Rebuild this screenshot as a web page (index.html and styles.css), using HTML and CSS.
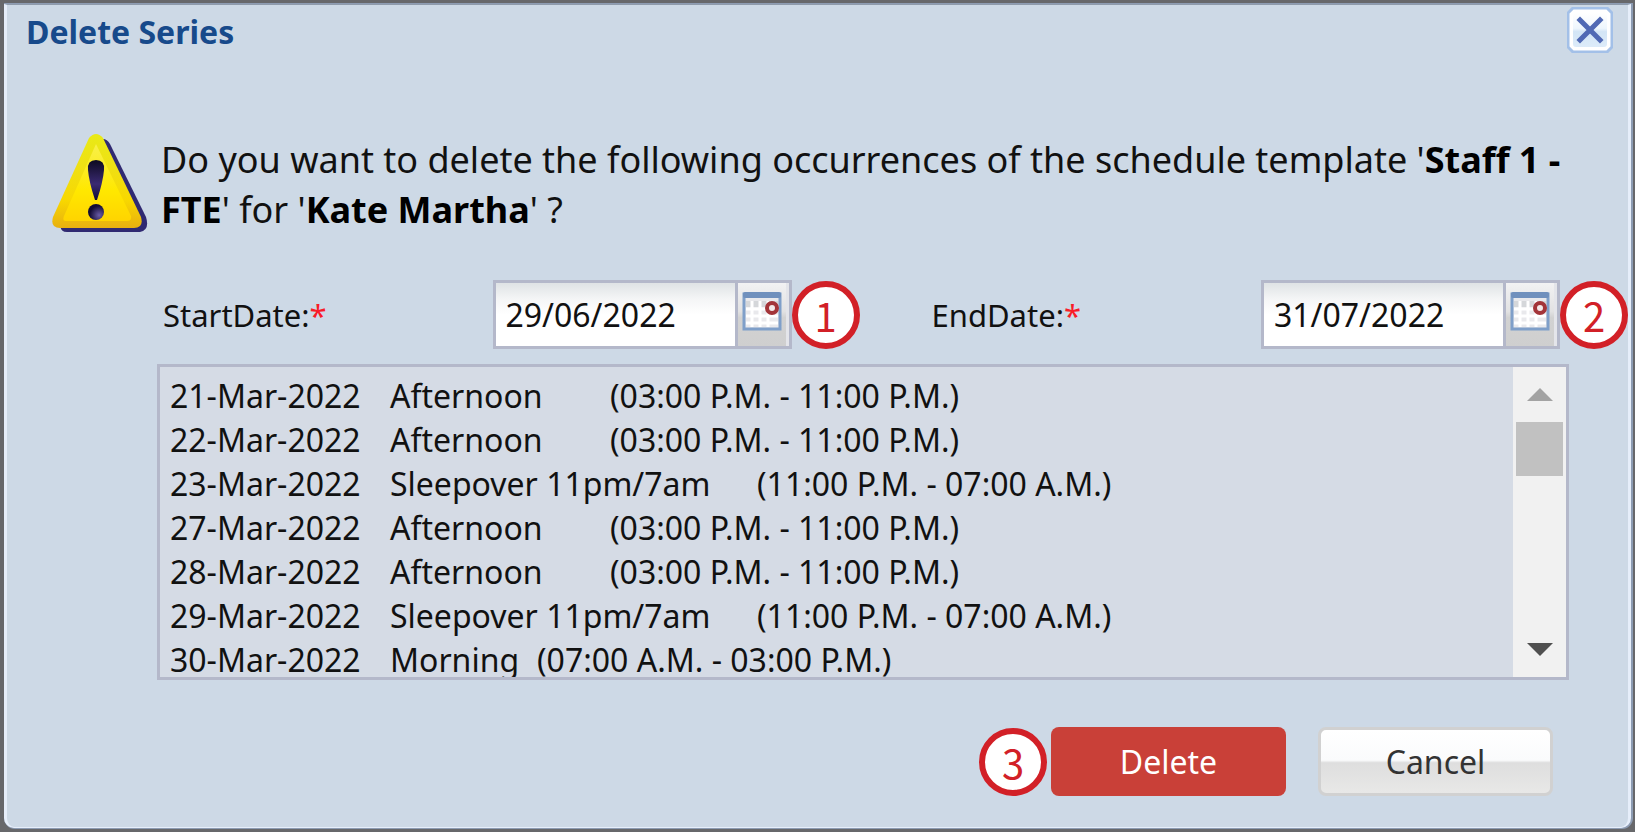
FILE: index.html
```html
<!DOCTYPE html>
<html lang="en">
<head>
<meta charset="utf-8">
<meta name="viewport" content="width=device-width, initial-scale=1">
<title>Delete Series</title>
<link rel="stylesheet" href="styles.css">
</head>
<body>
<main class="dialog" role="dialog" aria-labelledby="dialog-title">
  <header class="dialog-header">
    <h1 class="dialog-title" id="dialog-title">Delete Series</h1>
    <button class="close" type="button" aria-label="Close">
      <svg viewBox="0 0 46 46" width="46" height="46" aria-hidden="true">
        <defs>
          <linearGradient id="close-fill" x1="0" y1="0" x2="0" y2="1">
            <stop offset="0" stop-color="#ffffff"/>
            <stop offset="0.45" stop-color="#eef6fd"/>
            <stop offset="0.55" stop-color="#d3e5f6"/>
            <stop offset="1" stop-color="#dcebf9"/>
          </linearGradient>
        </defs>
        <path d="M6 1H40L45 6V40L40 45H6L1 40V6Z" fill="#fff" stroke="#a3c0e8" stroke-width="3"/>
        <rect x="6" y="6" width="34" height="34" rx="3" fill="url(#close-fill)"/>
        <path d="M13 13L33 33M33 13L13 33" stroke="#5069b4" stroke-width="5" stroke-linecap="square"/>
      </svg>
    </button>
  </header>

  <section class="prompt">
    <svg class="prompt-icon" viewBox="0 0 98 100" width="98" height="100" aria-hidden="true">
      <defs>
        <linearGradient id="warn-fill" x1="0" y1="0" x2="0" y2="1">
          <stop offset="0" stop-color="#e9ea16"/>
          <stop offset="0.35" stop-color="#efe014"/>
          <stop offset="0.7" stop-color="#f8d800"/>
          <stop offset="1" stop-color="#e8b010"/>
        </linearGradient>
        <linearGradient id="warn-face" x1="0" y1="0" x2="0" y2="1">
          <stop offset="0" stop-color="#f8f04a"/>
          <stop offset="0.6" stop-color="#ffe800"/>
          <stop offset="1" stop-color="#ffd400"/>
        </linearGradient>
        <radialGradient id="warn-dot" cx="0.7" cy="0.7" r="0.6">
          <stop offset="0" stop-color="#6a5ca8"/>
          <stop offset="1" stop-color="#120b35"/>
        </radialGradient>
        <linearGradient id="warn-mark" x1="0" y1="0" x2="0" y2="1">
          <stop offset="0" stop-color="#0d0a20"/>
          <stop offset="0.6" stop-color="#3a2a72"/>
          <stop offset="1" stop-color="#120b35"/>
        </linearGradient>
      </defs>
      <path d="M52 6Q56 6 59 11L95 84Q99 97 89 99H16Q8 99 10 90Z" fill="#302a72"/>
      <path d="M38 5Q45 -3 52 5L90 84Q93 95 83 95H9Q-1 95 2 84Z" fill="url(#warn-fill)"/>
      <path d="M45 11L80 83Q81 88 76 88H15Q11 88 13 83Z" fill="url(#warn-face)"/>
      <path d="M45 27Q54 27 53 37Q52 49 46 67H44Q38 49 37 37Q36 27 45 27Z" fill="url(#warn-mark)"/>
      <circle cx="45" cy="79" r="8" fill="url(#warn-dot)"/>
    </svg>
    <p class="prompt-text">Do you want to delete the following occurrences of the schedule template '<b>Staff 1 - FTE</b>' for '<b>Kate Martha</b>' ?</p>
  </section>

  <form class="form">
    <div class="fields">
      <div class="field">
        <label class="field-label" for="start-date">StartDate:<span class="required">*</span></label>
        <div class="picker">
          <input class="picker-input" id="start-date" type="text" value="29/06/2022">
          <button class="picker-button" type="button" aria-label="Choose start date">
            <svg viewBox="0 0 40 40" width="40" height="40" aria-hidden="true">
              <rect x="2" y="3" width="36" height="35" fill="#e9e9ec" stroke="#7f9fc9" stroke-width="3"/>
              <rect x="1" y="1" width="38" height="6" rx="2" fill="#7090bd"/>
              <path d="M4 10H36V16H4Z" fill="#d5d7da"/>
              <path d="M10 10V36M18 10V36M26 10V36M4 18H36M4 25H36M4 32H36" stroke="#fff" stroke-width="3"/>
              <circle cx="30" cy="17" r="5" fill="#f3e9e9" stroke="#a33439" stroke-width="4"/>
            </svg>
          </button>
        </div>
        <span class="callout">1</span>
      </div>
      <div class="field">
        <label class="field-label" for="end-date">EndDate:<span class="required">*</span></label>
        <div class="picker">
          <input class="picker-input" id="end-date" type="text" value="31/07/2022">
          <button class="picker-button" type="button" aria-label="Choose end date">
            <svg viewBox="0 0 40 40" width="40" height="40" aria-hidden="true">
              <rect x="2" y="3" width="36" height="35" fill="#e9e9ec" stroke="#7f9fc9" stroke-width="3"/>
              <rect x="1" y="1" width="38" height="6" rx="2" fill="#7090bd"/>
              <path d="M4 10H36V16H4Z" fill="#d5d7da"/>
              <path d="M10 10V36M18 10V36M26 10V36M4 18H36M4 25H36M4 32H36" stroke="#fff" stroke-width="3"/>
              <circle cx="30" cy="17" r="5" fill="#f3e9e9" stroke="#a33439" stroke-width="4"/>
            </svg>
          </button>
        </div>
        <span class="callout">2</span>
      </div>
    </div>

    <div class="list">
      <ul class="list-items">
        <li class="item"><span class="item-date">21-Mar-2022</span><span class="shift-afternoon">Afternoon</span><span>(03:00 P.M. - 11:00 P.M.)</span></li>
        <li class="item"><span class="item-date">22-Mar-2022</span><span class="shift-afternoon">Afternoon</span><span>(03:00 P.M. - 11:00 P.M.)</span></li>
        <li class="item"><span class="item-date">23-Mar-2022</span><span class="shift-sleepover">Sleepover 11pm/7am</span><span>(11:00 P.M. - 07:00 A.M.)</span></li>
        <li class="item"><span class="item-date">27-Mar-2022</span><span class="shift-afternoon">Afternoon</span><span>(03:00 P.M. - 11:00 P.M.)</span></li>
        <li class="item"><span class="item-date">28-Mar-2022</span><span class="shift-afternoon">Afternoon</span><span>(03:00 P.M. - 11:00 P.M.)</span></li>
        <li class="item"><span class="item-date">29-Mar-2022</span><span class="shift-sleepover">Sleepover 11pm/7am</span><span>(11:00 P.M. - 07:00 A.M.)</span></li>
        <li class="item"><span class="item-date">30-Mar-2022</span><span class="shift-morning">Morning</span><span>(07:00 A.M. - 03:00 P.M.)</span></li>
      </ul>
      <div class="scrollbar">
        <button class="scroll-button" type="button" aria-label="Scroll up"><svg viewBox="0 0 26 13" width="26" height="13" aria-hidden="true"><path d="M13 0L26 13H0Z" fill="#a3a3a3"/></svg></button>
        <div class="scroll-track"><div class="scroll-thumb"></div></div>
        <button class="scroll-button" type="button" aria-label="Scroll down"><svg viewBox="0 0 26 13" width="26" height="13" aria-hidden="true"><path d="M0 0H26L13 13Z" fill="#505050"/></svg></button>
      </div>
    </div>

    <div class="actions">
      <span class="callout">3</span>
      <button class="button button-delete" type="submit">Delete</button>
      <button class="button button-cancel" type="button">Cancel</button>
    </div>
  </form>
</main>
</body>
</html>
```

FILE: styles.css
```css
* {
  box-sizing: border-box;
}

body {
  margin: 0;
  min-height: 100vh;
  padding: 4px;
  display: flex;
  background: #67686b;
  color: #111;
  font-family: "Noto Sans", "Open Sans", sans-serif;
  font-size: 32px;
}

button {
  margin: 0;
  padding: 0;
  border: 0;
  background: none;
  font: inherit;
  cursor: pointer;
}

svg {
  display: block;
}

.dialog {
  flex: 1;
  min-width: 0;
  border: solid #e6eefa;
  border-width: 0 3px 1px;
  border-top: 1px solid #8f9bab;
  border-radius: 0 0 10px 10px;
  box-shadow: 1px 0 0 1px #8d9cb3;
  background: #cdd9e6;
}

.dialog-header {
  display: flex;
  justify-content: space-between;
  align-items: flex-start;
  padding: 2px 15px 0 19px;
}

.dialog-title {
  margin: 0;
  padding-top: 3px;
  color: #174a8b;
  font-size: 32px;
  line-height: 44px;
  font-weight: 700;
}

.prompt {
  display: flex;
  align-items: flex-start;
  gap: 12px;
  padding: 79px 60px 0 44px;
}

.prompt-icon {
  flex: none;
}

.prompt-text {
  margin: 0;
  padding-top: 2px;
  font-size: 36px;
  line-height: 50px;
}

.prompt-text b {
  color: #000;
}

.form {
  padding: 45px 0 0 150px;
}

.fields {
  display: flex;
  gap: 72px;
  padding-left: 6px;
}

.field {
  flex: 1;
  display: flex;
  align-items: center;
}

.field-label {
  flex: 1;
  font-size: 31px;
}

.required {
  color: #f81c28;
}

.picker {
  display: flex;
  width: 299px;
  height: 69px;
  border: 3px solid #b4b8ca;
}

.picker-input {
  flex: 1;
  min-width: 0;
  padding: 0 10px;
  border: 0;
  border-right: 3px solid #b4b8ca;
  background: linear-gradient(#dfe3e5, #f4f5f6 25%, #fff 50%);
  color: #111;
  font: inherit;
}

.picker-button {
  display: flex;
  flex: none;
  justify-content: center;
  width: 51px;
  padding-top: 8px;
  border-right: 3px solid #e4e5ea;
  background: linear-gradient(#f2f2f3, #e2e2e3 45%, #d2d2d2 55%, #cfcfcf);
}

.callout {
  display: flex;
  flex: none;
  justify-content: center;
  align-items: center;
  width: 68px;
  height: 68px;
  border: 6px solid #d22027;
  border-radius: 50%;
  background: #fff;
  color: #d22027;
  font-family: "Noto Sans CJK JP", sans-serif;
  font-size: 40px;
  line-height: 56px;
}

.list {
  display: flex;
  height: 316px;
  margin: 15px 59px 0 0;
  border: 3px solid #b4b8ca;
  background: #d5dbe5;
}

.list-items {
  flex: 1;
  margin: 0;
  padding: 7px 10px 0;
  overflow: hidden;
  list-style: none;
}

.item {
  display: flex;
  line-height: 44px;
  white-space: nowrap;
}

.item-date {
  width: 220px;
}

.shift-afternoon {
  width: 220px;
}

.shift-sleepover {
  width: 367px;
}

.shift-morning {
  width: 147px;
}

.scrollbar {
  display: flex;
  flex: none;
  flex-direction: column;
  width: 53px;
  background: #f1f1f1;
}

.scroll-button {
  display: flex;
  justify-content: center;
  align-items: center;
  height: 55px;
}

.scroll-track {
  flex: 1;
  padding: 0 3px;
}

.scroll-thumb {
  height: 54px;
  background: #c1c1c1;
}

.actions {
  display: flex;
  justify-content: flex-end;
  align-items: center;
  margin-top: 47px;
  padding: 0 75px 24px 0;
}

.button {
  width: 235px;
  height: 69px;
  border-radius: 8px;
}

.button-delete {
  margin: 0 32px 0 4px;
  background: #c94038;
  color: #fff;
}

.button-cancel {
  border: 3px solid #d1d1d1;
  background: linear-gradient(#fff, #fafbfc 48%, #dedede 52%, #e8e8e7);
  color: #333;
}
```
